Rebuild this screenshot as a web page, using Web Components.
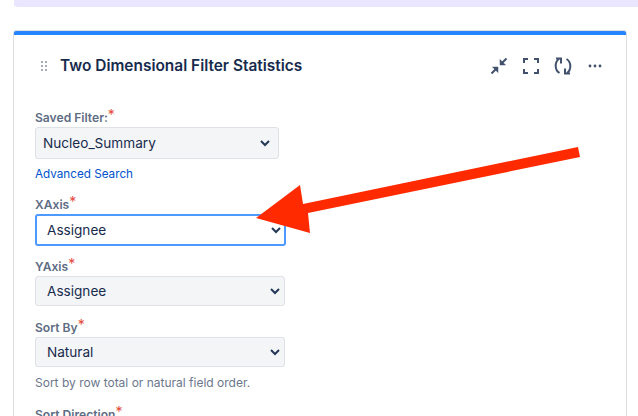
<!DOCTYPE html>
<html><head><meta charset="utf-8">
<style>
html,body{margin:0;padding:0;height:416px;overflow:hidden;background:#fff;font-family:Inter,"Liberation Sans",sans-serif;}
</style></head><body>
<template id="t-page"><style>
:host{display:flex;flex-direction:column;position:relative;height:416px;overflow:hidden;padding-left:13px;box-sizing:border-box}
.banner{height:7px;background:#EAE6FF;border-radius:0 0 0 3px;flex:none;margin-left:1px}
.slot{display:block;margin-top:23px;margin-right:11px}
svg{position:absolute;left:0;top:0;width:638px;height:416px;pointer-events:none}
</style><div class="banner"></div><div class="slot"><slot></slot></div>
<svg viewBox="0 0 638 416"><polygon fill="#FF2A00" points="578,147 580,157 308,213 310,233 256,218 300,185 303,204"/></svg></template>

<template id="t-card"><style>
:host{display:block;background:#fff;border:1px solid #DCDEE2;border-radius:3px 3px 0 0;height:420px;box-sizing:border-box}
.bar{height:4px;background:#2684FF;border-radius:2px 2px 0 0}
header{display:flex;align-items:center;height:62px;padding:0 21px 0 26px}
.grip{width:10px;height:12px;flex:none;margin-right:10px}
h2{margin:0;font:600 15.45px/20px Inter,"Liberation Sans",sans-serif;color:#172B4D;flex:1;white-space:nowrap}
.tools{display:flex;gap:12px;align-items:center;color:#42526E}
.tools svg{width:20px;height:20px;display:block}
.body{padding:13px 0 0 21px;display:flex;flex-direction:column}
</style><div class="bar"></div><header>
<svg class="grip" viewBox="0 0 10 12" fill="#A5ADBA"><rect x="1" y="1" width="2" height="2"/><rect x="5" y="1" width="2" height="2"/><rect x="1" y="5" width="2" height="2"/><rect x="5" y="5" width="2" height="2"/><rect x="1" y="9" width="2" height="2"/><rect x="5" y="9" width="2" height="2"/></svg>
<h2><slot name="title"></slot></h2>
<div class="tools">
<svg viewBox="0 0 20 20" fill="currentColor" stroke="currentColor"><path d="M11 3.500V9h5.500zM3.500 11H9v5.500z" stroke-width=".5"/><path d="M17.500 2.500L13 7M2.500 17.500L7 13" stroke-width="2" fill="none"/></svg>
<svg viewBox="0 0 20 20" fill="none" stroke="currentColor" stroke-width="2"><path d="M7 3H3v4M13 3h4v4M17 13v4h-4M7 17H3v-4"/></svg>
<svg viewBox="0 0 20 20" fill="none" stroke="currentColor" stroke-width="2"><path d="M6.500 17C1.500 14 1.500 6 6 3M13.500 3c5 3 5 11 .5 14"/><path d="M3 2.500h5v5M17 17.500h-5v-5"/></svg>
<svg viewBox="0 0 20 20" fill="currentColor"><circle cx="5" cy="10" r="1.400"/><circle cx="10" cy="10" r="1.400"/><circle cx="15" cy="10" r="1.400"/></svg>
</div></header><div class="body"><slot></slot></div></template>

<template id="t-field"><style>
:host{display:block;margin-bottom:15px}
:host([tight]){margin-bottom:14px}
:host([loose]){margin-bottom:16px}
label{display:block;font:600 12.1px/16px Inter,"Liberation Sans",sans-serif;color:#5E6C84;white-space:nowrap}
i{font-style:normal;color:#E5493A;font-size:14px;line-height:0;position:relative;top:-2px;font-weight:400}
</style><label><slot name="label"></slot><i>*</i></label><slot></slot></template>

<template id="t-select"><style>
:host{display:flex;align-items:center;box-sizing:border-box;width:250px;height:30px;background:#F4F5F7;border:1px solid #DFE1E6;border-radius:3px;padding:0 4px 0 11px;font:400 13.6px/20px Inter,"Liberation Sans",sans-serif;color:#172B4D;margin-top:1px}
:host([focused]){background:#fff;border:2px solid #4C9AFF;padding-left:10px;padding-right:3px;width:251px;height:32px;margin-bottom:-2px}
:host([compact]){width:244px;height:32px;padding-left:7px;padding-right:8px;margin-top:1px}
span{flex:1;white-space:nowrap}
svg{width:10px;height:7px;flex:none}
</style><span><slot></slot></span><svg viewBox="0 0 10 7" fill="none" stroke="#253858" stroke-width="2"><path d="M1 1l4 4 4-4"/></svg></template>

<template id="t-link"><style>
:host{display:block;font:400 11.7px/16px Inter,"Liberation Sans",sans-serif;color:#0052CC;margin-top:7px;white-space:nowrap}
</style><slot></slot></template>

<template id="t-hint"><style>
:host{display:block;font:400 12px/16px Inter,"Liberation Sans",sans-serif;color:#6B778C;margin-top:8px;white-space:nowrap}
</style><slot></slot></template>

<script>
function def(name,tpl){customElements.define(name,class extends HTMLElement{constructor(){super();this.attachShadow({mode:"open"}).appendChild(document.getElementById(tpl).content.cloneNode(true));}});}
def("app-page","t-page");def("gadget-card","t-card");def("form-field","t-field");def("select-box","t-select");def("text-link","t-link");def("field-hint","t-hint");
</script>
<app-page><gadget-card>
<span slot="title">Two Dimensional Filter Statistics</span>
<form-field><span slot="label">Saved Filter:</span><select-box compact>Nucleo_Summary</select-box><text-link>Advanced Search</text-link></form-field>
<form-field><span slot="label">XAxis</span><select-box focused>Assignee</select-box></form-field>
<form-field tight><span slot="label">YAxis</span><select-box>Assignee</select-box></form-field>
<form-field loose><span slot="label">Sort By</span><select-box>Natural</select-box><field-hint>Sort by row total or natural field order.</field-hint></form-field>
<form-field><span slot="label">Sort Direction</span></form-field>
</gadget-card></app-page>
</body></html>
